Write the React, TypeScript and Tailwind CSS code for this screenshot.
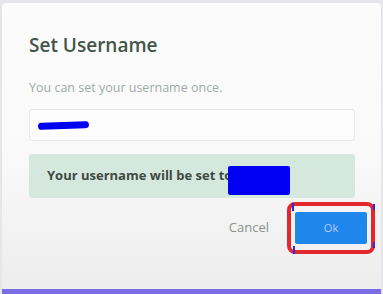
export default function App() {
  return (
    <div className="w-[383px] h-[294px] bg-[#e6e6ea] pt-[3px] px-[2px] overflow-hidden font-['Open_Sans',sans-serif]">
      <div className="flex h-full flex-col rounded-t-[4px] border-b-[5px] border-[#7b6de4] bg-gradient-to-b from-[#fbfbfb] via-[#fafafa] to-[#ededed] pl-[27px] pr-[26px]">
        <h2 className="mt-[29px] text-[19px] font-semibold leading-[26px] text-[#435549]">
          Set Username
        </h2>
        <p className="mt-[21px] text-[12.5px] leading-[18px] text-[#a0aaa4]">
          You can set your username once.
        </p>
        <div className="mt-[12px] flex h-[32px] items-center rounded-[3px] border border-[#e6e6e6] bg-[#fdfdfd] px-[8px]">
          <div className="h-[7px] w-[51px] -rotate-2 rounded-full bg-[#0000f5]" />
        </div>
        <div className="mt-[13px] flex h-[44px] items-center rounded-[3px] bg-[#d5e8de] pl-[18px]">
          <span className="text-[13px] font-bold text-[#3e4a43]">
            Your username will be set to
          </span>
          <div className="ml-[-4px] mt-[8px] h-[29px] w-[62px] rounded-[2px] bg-[#0000f5]" />
        </div>
        <div className="mt-[4px] flex items-center justify-end">
          <button className="mr-[18px] text-[13px] text-[#8a928d]">Cancel</button>
          <div className="relative mr-[-20px] rounded-[8px] border-[4px] border-[#e3282b] px-[4px] py-[6px]">
            <button className="flex h-[32px] w-[72px] items-center justify-center rounded-[2px] bg-[#1f87ec] text-[11px] text-[#b8c9f0]">
              Ok
            </button>
            <span className="absolute left-[1px] top-[-3px] h-[8px] w-[2px] bg-[#2a2ae8]" />
            <span className="absolute left-[2px] bottom-[-4px] h-[8px] w-[2px] bg-[#2a2ae8]" />
            <span className="absolute right-[-4px] top-[-2px] h-[6px] w-[2px] bg-[#2a2ae8]" />
            <span className="absolute right-[-4px] bottom-[2px] h-[6px] w-[2px] bg-[#2a2ae8]" />
          </div>
        </div>
      </div>
    </div>
  );
}
